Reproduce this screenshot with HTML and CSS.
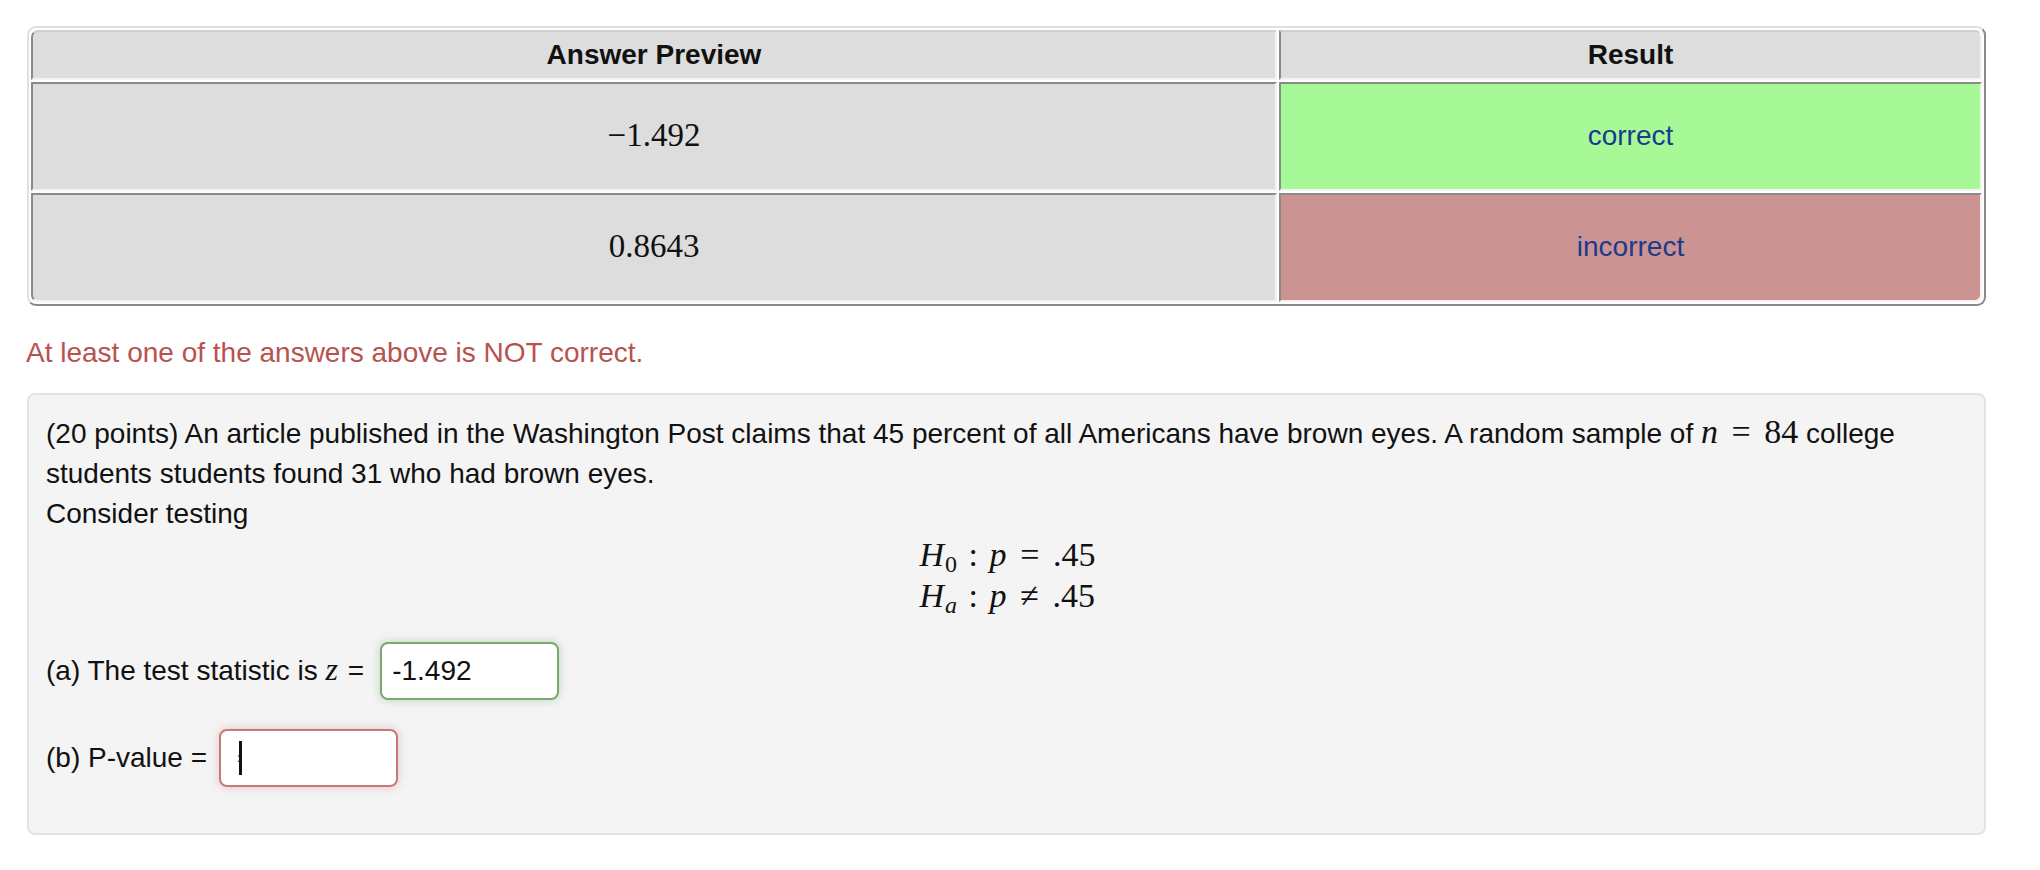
FILE: index.html
```html
<!DOCTYPE html>
<html>
<head>
<meta charset="utf-8">
<title>Problem</title>
<link rel="stylesheet" href="styles.css">
</head>
<body>
<div class="page">
  <table class="attempt">
    <thead>
      <tr><th class="col-preview">Answer Preview</th><th class="col-result">Result</th></tr>
    </thead>
    <tbody>
      <tr><td class="preview"><span class="num">−1.492</span></td><td class="result ok">correct</td></tr>
      <tr class="last"><td class="preview"><span class="num">0.8643</span></td><td class="result bad">incorrect</td></tr>
    </tbody>
  </table>

  <p class="warn">At least one of the answers above is NOT correct.</p>

  <div class="well">
    <p class="text">(20 points) An article published in the Washington Post claims that 45 percent of all Americans have brown eyes. A random sample of <span class="math"><span class="mi">n</span><span class="mo">=</span><span class="mn">84</span></span> college students students found 31 who had brown eyes.<br>Consider testing</p>

    <div class="display">
      <div class="eqs">
        <div class="eq"><span class="mi">H</span><span class="sub">0</span><span class="mo colon">:</span><span class="mi">p</span><span class="mo">=</span><span class="mn">.45</span></div>
        <div class="eq"><span class="mi">H</span><span class="sub it">a</span><span class="mo colon">:</span><span class="mi">p</span><span class="mo">≠</span><span class="mn">.45</span></div>
      </div>
    </div>

    <div class="row row-a">
      <span class="label">(a) The test statistic is <span class="mi z">z</span> =</span>
      <span class="field correct">-1.492</span>
    </div>

    <div class="row row-b">
      <span class="label">(b) P-value =</span>
      <span class="field incorrect"><span class="tick">›</span><span class="caret"></span></span>
    </div>
  </div>
</div>
</body>
</html>
```

FILE: styles.css
```css
html, body {
  margin: 0;
  padding: 0;
  background: #ffffff;
}

body {
  font-family: "Liberation Sans", Arial, sans-serif;
  font-size: 28px;
  line-height: 40px;
  color: #111;
}

.page {
  padding: 26px 0 0 27px;
  width: 1959px;
}

/* ---------- attempt results table ---------- */
.attempt {
  width: 1959px;
  table-layout: fixed;
  border-collapse: separate;
  border-spacing: 2px;
  border: 2px solid;
  border-color: #e0e0e0 #8a8a8a #8a8a8a #e0e0e0;
  border-radius: 9px;
  font-size: 28px;
  line-height: 40px;
}

.attempt th,
.attempt td {
  background: #dddddd;
  border: 2px solid;
  border-color: #8a8a8a #f3f3f3 #f3f3f3 #8a8a8a;
  text-align: center;
  color: #111;
}

.attempt th {
  font-weight: bold;
  padding: 3px 0;
  border-top-color: #cfcfcf;
}

.attempt th.col-preview {
  width: 1242px;
  border-top-left-radius: 7px;
}

.attempt th.col-result {
  border-top-right-radius: 7px;
}

.attempt td {
  padding: 31px 0 32px;
}

.attempt tr.last td:first-child {
  border-bottom-left-radius: 7px;
}

.attempt tr.last td:last-child {
  border-bottom-right-radius: 7px;
}

.attempt .num {
  font-family: "Liberation Serif", "Times New Roman", serif;
  font-size: 33px;
  color: #111;
}

.attempt td.result {
  color: #1b3a8c;
}

.attempt td.ok {
  background: #a6f996;
}

.attempt td.bad {
  background: #cb9391;
}

/* ---------- message ---------- */
.warn {
  margin: 27px 0 20px -1px;
  color: #b8524f;
}

/* ---------- problem well ---------- */
.well {
  box-sizing: border-box;
  width: 1959px;
  height: 442px;
  background: #f4f4f4;
  border: 2px solid #e3e3e3;
  border-radius: 8px;
  padding: 19px 17px 16px;
  color: #111;
}

.text {
  margin: 0;
}

/* math */
.mi,
.mn,
.mo,
.sub {
  font-family: "Liberation Serif", "Times New Roman", serif;
  font-size: 34px;
  line-height: 1;
}

.mi {
  font-style: italic;
}

.mo {
  margin: 0 0.4em;
}

.mo.colon {
  margin: 0 0.34em;
}

.sub {
  font-size: 24px;
  position: relative;
  top: 6px;
  margin-left: 1px;
}

.sub.it {
  font-style: italic;
}

.display {
  text-align: center;
  font-size: 34px;
  line-height: 41px;
  padding-left: 2px;
}

.eqs {
  display: inline-block;
  text-align: left;
}

.eq {
  height: 41px;
  white-space: nowrap;
}

/* answer rows */
.row {
  display: flex;
  align-items: center;
}

.row-a {
  margin-top: 26px;
  gap: 16px;
}

.row-b {
  margin-top: 29px;
  gap: 12px;
}

.label .z {
  font-size: 32px;
  margin-right: 2px;
}

.field {
  box-sizing: border-box;
  display: flex;
  align-items: center;
  width: 179px;
  height: 58px;
  padding: 0 10px;
  background: #ffffff;
  border: 2px solid;
  border-radius: 8px;
  font-size: 28px;
  color: #111;
}

.field.correct {
  border-color: #7aa96d;
  box-shadow: 0 0 10px rgba(81, 153, 81, 0.35);
}

.field.incorrect {
  border-color: #c97876;
  box-shadow: 0 0 10px rgba(191, 84, 84, 0.3);
}

.tick {
  font-size: 16px;
  margin-left: 6px;
  color: #333;
}

.caret {
  display: inline-block;
  width: 3px;
  height: 34px;
  margin-left: -3px;
  background: #111;
}
```
